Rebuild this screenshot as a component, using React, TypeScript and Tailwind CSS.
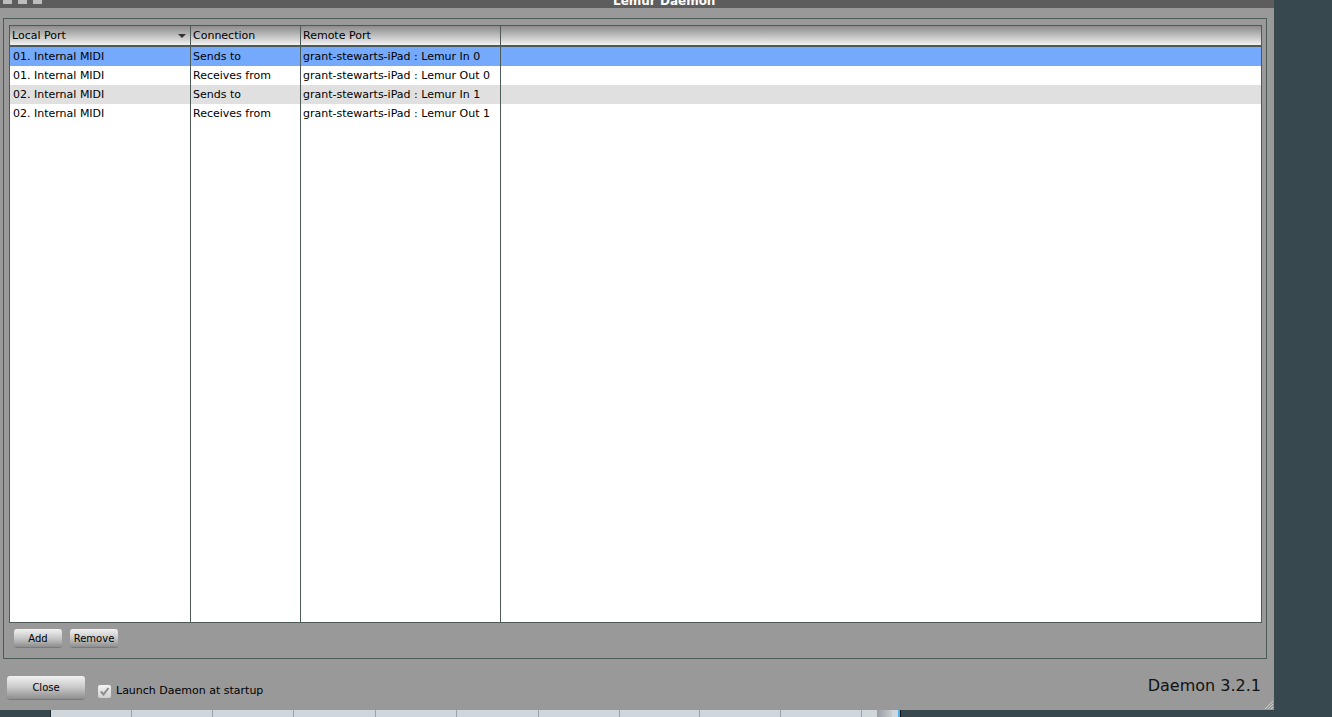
import React from "react";

const rows = [
  { a: "01. Internal MIDI", b: "Sends to", c: "grant-stewarts-iPad : Lemur In 0", bg: "bg-[#74a9fc]" },
  { a: "01. Internal MIDI", b: "Receives from", c: "grant-stewarts-iPad : Lemur Out 0", bg: "bg-white" },
  { a: "02. Internal MIDI", b: "Sends to", c: "grant-stewarts-iPad : Lemur In 1", bg: "bg-[#e0e0e0]" },
  { a: "02. Internal MIDI", b: "Receives from", c: "grant-stewarts-iPad : Lemur Out 1", bg: "bg-white" },
];

const font = { fontFamily: "'DejaVu Sans', Verdana, sans-serif" };

function Btn({ label, w, h }: { label: string; w: string; h: string }) {
  return (
    <div
      className={`${w} ${h} flex items-center justify-center rounded-[3px] bg-gradient-to-b from-[#f2f2f2] via-[#c8c8c8] to-[#8e8e8e] text-[10px] text-black shadow-[0_1px_0_#7a7a7a]`}
    >
      {label}
    </div>
  );
}

export default function App() {
  return (
    <div className="w-[1332px] h-[717px] bg-[#37494f] overflow-hidden flex flex-col" style={font}>
      <div className="flex flex-1 min-h-0">
        <div className="w-[1274px] flex flex-col">
          {/* title bar */}
          <div className="h-[8px] bg-[#5d5d5d] relative overflow-hidden">
            <div className="absolute left-[3px] top-[-5px] flex gap-[6px]">
              <div className="w-[9px] h-[9px] bg-[#bdbdbd]" />
              <div className="w-[9px] h-[9px] bg-[#bdbdbd]" />
              <div className="w-[9px] h-[9px] bg-[#bdbdbd]" />
            </div>
            <div className="absolute left-[613px] top-[-8px] text-white text-[12px] font-bold whitespace-nowrap">
              Lemur Daemon
            </div>
          </div>
          {/* window body */}
          <div className="flex-1 bg-[#999999] flex flex-col pt-[10px] px-[3px] relative">
            <div className="h-[641px] border border-[#4c5a58] mr-[4px] pt-[6px] px-[5px] flex flex-col">
              <div className="h-[598px] border border-[#4c5a58] bg-white flex flex-col mr-[-1px] relative">
                {/* header */}
                <div className="h-[21px] flex bg-gradient-to-b from-[#8c8c8c] to-[#f2f2f2] border-b-2 border-[#4c5a58] text-[11px] text-black leading-[20px] shrink-0 whitespace-nowrap">
                  <div className="w-[181px] border-r border-[#4c5a58] pl-[2px] flex justify-between pr-[3px]">
                    <span>Local Port</span>
                    <svg width="9" height="9" viewBox="0 0 9 9" className="mt-[6px]">
                      <path d="M0 2 L8 2 L4 6 Z" fill="#333" />
                    </svg>
                  </div>
                  <div className="w-[110px] border-r border-[#4c5a58] pl-[2px]">Connection</div>
                  <div className="w-[200px] border-r border-[#4c5a58] pl-[2px]">Remote Port</div>
                  <div className="flex-1" />
                </div>
                {/* body */}
                <div className="flex-1 relative">
                  <div className="absolute inset-0 flex pointer-events-none">
                    <div className="w-[181px] border-r border-[#4c5a58]" />
                    <div className="w-[110px] border-r border-[#4c5a58]" />
                    <div className="w-[200px] border-r border-[#4c5a58]" />
                  </div>
                  <div className="relative flex flex-col">
                    {rows.map((r, i) => (
                      <div key={i} className={`h-[19px] flex ${r.bg} text-[11px] text-black leading-[19px] whitespace-nowrap`}>
                        <div className="w-[181px] border-r border-[#4c5a58] pl-[3px]">{r.a}</div>
                        <div className="w-[110px] border-r border-[#4c5a58] pl-[2px]">{r.b}</div>
                        <div className="w-[200px] border-r border-[#4c5a58] pl-[2px]">{r.c}</div>
                        <div className="flex-1" />
                      </div>
                    ))}
                  </div>
                </div>
              </div>
              <div className="flex gap-[8px] pl-[5px] pt-[6px]">
                <Btn label="Add" w="w-[48px]" h="h-[18px]" />
                <Btn label="Remove" w="w-[48px]" h="h-[18px]" />
              </div>
            </div>
            {/* footer */}
            <div className="flex items-center mt-[15px] pl-[4px]">
              <Btn label="Close" w="w-[78px]" h="h-[23px]" />
              <div className="ml-[13px] mt-[8px] w-[13px] h-[13px] rounded-[2px] bg-gradient-to-b from-[#f4f4f4] to-[#cfcfcf] flex items-center justify-center">
                <svg width="11" height="11" viewBox="0 0 11 11">
                  <path d="M2 5.5 L4.5 8.5 L9.5 2" stroke="#8a8a8a" strokeWidth="2" fill="none" />
                </svg>
              </div>
              <span className="ml-[5px] mt-[8px] text-[11px] text-black whitespace-nowrap">Launch Daemon at startup</span>
              <div className="flex-1" />
              <span className="mr-[10px] mb-[2px] text-[16px] text-[#111] whitespace-nowrap">Daemon 3.2.1</span>
            </div>
            <svg width="12" height="12" viewBox="0 0 12 12" className="absolute right-0 bottom-0">
              <path d="M11 3 L3 11 M11 6 L6 11 M11 9 L9 11" stroke="#d0d0d0" strokeWidth="1" />
            </svg>
          </div>
        </div>
        <div className="flex-1" />
      </div>
      {/* bottom strip */}
      <div className="h-[7px] flex shrink-0">
        <div className="w-[50px] bg-[#37494f]" />
        <div className="w-[1px] bg-[#1f2a2e]" />
        <div className="flex bg-[#cfd7dc]">
          {[81, 81, 81, 82, 81, 82, 81, 80, 81, 81].map((w, i) => (
            <div key={i} className="border-r border-[#9aa3a8]" style={{ width: w }} />
          ))}
          <div className="w-[15px]" />
        </div>
        <div className="w-[15px] bg-gradient-to-r from-[#9a9ea2] to-[#c8cccf]" />
        <div className="w-[6px] bg-[#cfd7dc]" />
        <div className="w-[2px] bg-[#4fb0f0]" />
        <div className="w-[1px] bg-[#111]" />
        <div className="flex-1 bg-[#37494f]" />
      </div>
    </div>
  );
}
